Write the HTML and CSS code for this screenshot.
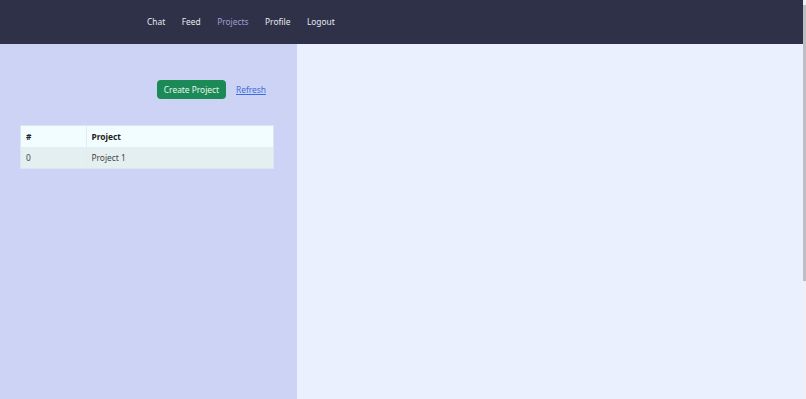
FILE: index.html
```html
<!DOCTYPE html>
<html lang="en">
<head>
<meta charset="utf-8">
<title>Projects</title>
<link rel="stylesheet" href="styles.css">
</head>
<body>
<nav class="topbar">
  <a class="nav-link" href="#">Chat</a>
  <a class="nav-link" href="#">Feed</a>
  <a class="nav-link active" href="#">Projects</a>
  <a class="nav-link" href="#">Profile</a>
  <a class="nav-link" href="#">Logout</a>
</nav>
<main class="content">
  <section class="sidebar">
    <div class="actions">
      <button class="btn-create">Create Project</button>
      <a class="refresh" href="#">Refresh</a>
    </div>
    <table class="projects">
      <thead>
        <tr><th class="col-id">#</th><th>Project</th></tr>
      </thead>
      <tbody>
        <tr><td class="col-id">0</td><td>Project 1</td></tr>
      </tbody>
    </table>
  </section>
  <section class="detail"></section>
</main>
<div class="scrollbar"><div class="thumb"></div></div>
</body>
</html>
```
FILE: styles.css
```css
* { box-sizing: border-box; }
html, body { height: 100%; }
body {
  margin: 0;
  font-family: "Noto Sans", "Open Sans", sans-serif;
  font-size: 8.4px;
  display: flex;
  flex-direction: column;
  background: #eaf0fe;
}
.topbar {
  height: 44px;
  background: #2e3148;
  display: flex;
  align-items: center;
  padding-left: 147px;
  padding-bottom: 2px;
  gap: 16.5px;
  margin-right: 3px;
}
.nav-link {
  color: #e8e9ef;
  text-decoration: none;
  font-size: 8.4px;
}
.nav-link.active { color: #a79bd0; }
.content {
  flex: 1;
  display: flex;
  margin-right: 3px;
}
.sidebar {
  width: 297px;
  background: #cdd3f5;
  padding: 36px 24px 0 21px;
}
.detail { flex: 1; background: #eaf0fe; }
.actions {
  display: flex;
  justify-content: flex-end;
  align-items: center;
  gap: 10px;
  margin-right: 7px;
}
.btn-create {
  background: #1b8a57;
  color: #e9f5ee;
  border: none;
  border-radius: 4px;
  height: 19px;
  width: 69px;
  padding: 0;
  font-family: inherit;
  font-size: 8.4px;
}
.refresh {
  color: #3b6ee0;
  font-size: 8.4px;
  text-decoration: underline;
}
.projects {
  margin-top: 27px;
  width: 252px;
  border-collapse: collapse;
  outline: 1px solid #dde4f2;
  font-size: 8.4px;
}
.projects th, .projects td {
  height: 21px;
  padding: 0 5px;
  text-align: left;
}
.projects th {
  background: #f1fdff;
  color: #222;
  font-weight: 700;
}
.projects td {
  background: #e4eff1;
  color: #444;
}
.col-id { width: 65px; border-right: 1px solid #e2ecf2; }
.scrollbar {
  position: fixed;
  top: 0; right: 0;
  width: 3px; height: 100%;
  background: #f0f0f4;
}
.thumb {
  margin-top: 5px;
  height: 276px;
  background: #bdbdc2;
}
```
